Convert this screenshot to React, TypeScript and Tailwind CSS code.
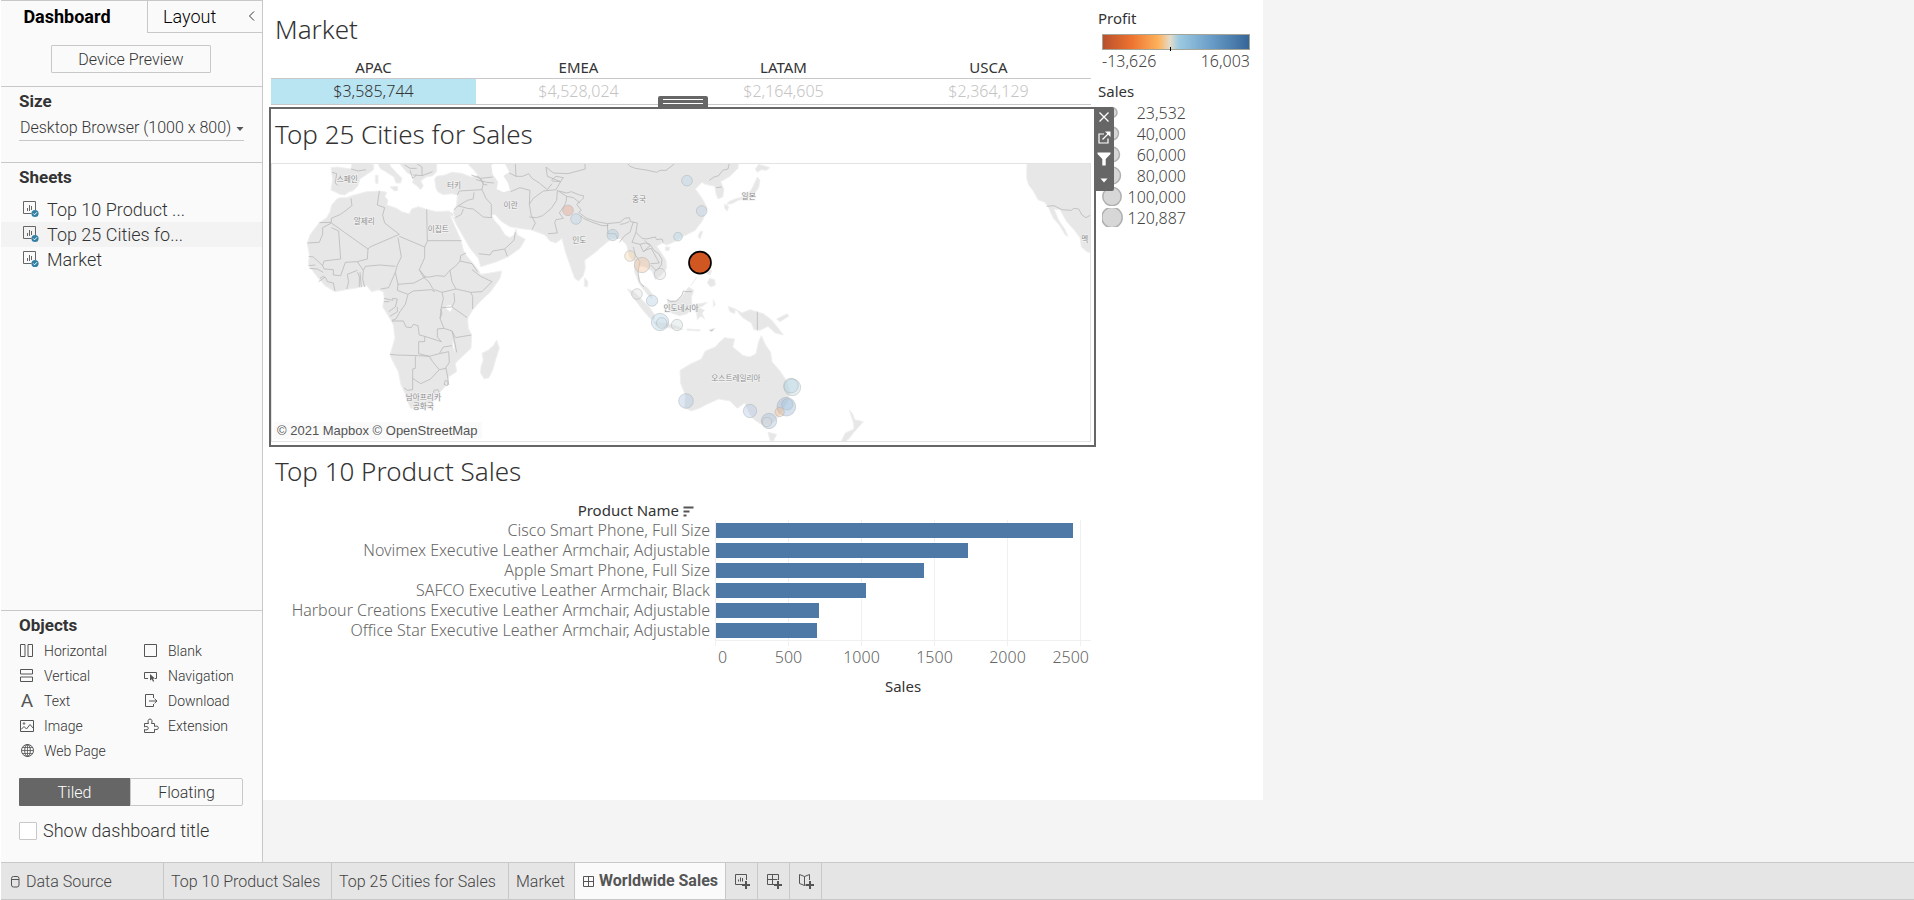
import React, { useState } from "react";

type IconProps = { className?: string; children: React.ReactNode };

function Icon({ className = "", children }: IconProps) {
  return (
    <svg
      viewBox="0 0 16 16"
      className={`h-4 w-4 shrink-0 ${className}`}
      fill="none"
      stroke="currentColor"
      strokeWidth="1"
      aria-hidden="true"
    >
      {children}
    </svg>
  );
}

/* ---------- Side pane ---------- */

const sheets = ["Top 10 Product ...", "Top 25 Cities fo...", "Market"];

function SheetIcon() {
  return (
    <svg viewBox="0 0 17 17" className="h-[17px] w-[17px] shrink-0" fill="none" aria-hidden="true">
      <path d="M13.500 9V.5H1.500v12h8" stroke="#666" />
      <path d="M5.500 10V7M7.500 10V4M9.500 9V5" stroke="#666" />
      <circle cx="13" cy="12.500" r="3.600" fill="#3480a5" />
      <path d="m11.300 12.500 1.300 1.300 2.300-2.500" stroke="#fff" />
    </svg>
  );
}

const objects: { label: string; icon: React.ReactNode }[] = [
  {
    label: "Horizontal",
    icon: (
      <Icon>
        <path d="M1.500 1.500h4.500v12h-4.500zM9 1.500h4.500v12h-4.500z" />
      </Icon>
    ),
  },
  {
    label: "Blank",
    icon: (
      <Icon>
        <path d="M1.500 1.500h12v12h-12z" />
      </Icon>
    ),
  },
  {
    label: "Vertical",
    icon: (
      <Icon>
        <path d="M1.500 1.500h12v4.500h-12zM1.500 9h12v4.500h-12z" />
      </Icon>
    ),
  },
  {
    label: "Navigation",
    icon: (
      <Icon>
        <path d="M5 10.500H1.500v-6h12v6H12" />
        <path d="m7 6 5 4.500-2 .2 1.200 2.600-1.200.5-1.200-2.600L7 12.500z" fill="currentColor" stroke="none" />
      </Icon>
    ),
  },
  {
    label: "Text",
    icon: <span className="w-4 text-center text-[19px] leading-4 font-normal">A</span>,
  },
  {
    label: "Download",
    icon: (
      <Icon>
        <path d="M10.500 5V1.500h-8v12h8V11M6 8h8M11.500 5.700 14 8l-2.500 2.300" />
      </Icon>
    ),
  },
  {
    label: "Image",
    icon: (
      <Icon>
        <path d="M1.500 2.500h13v11h-13z" />
        <path d="m2 11.500 3-3 2.500 2.500 3.500-4.500 3.500 4" />
        <circle cx="5" cy="5.500" r=".8" />
      </Icon>
    ),
  },
  {
    label: "Extension",
    icon: (
      <Icon>
        <path d="M1.500 5.500h4c-1-2-.5-4.500 1.500-4.500s2.500 2.500 1.500 4.500h3v3c1.800-.9 3.900-.4 3.900 1.300s-2.100 2.300-3.900 1.400v3.300h-10v-3c1.800.9 3.800.4 3.800-1.300s-2-2.200-3.800-1.300z" />
      </Icon>
    ),
  },
  {
    label: "Web Page",
    icon: (
      <Icon>
        <circle cx="8.500" cy="7.500" r="6" />
        <ellipse cx="8.500" cy="7.500" rx="2.800" ry="6" />
        <path d="M8.500 1.500v12M3.200 4.500h10.600M2.500 7.500h12M3.200 10.500h10.600" strokeWidth=".8" />
      </Icon>
    ),
  },
];

function SidePane() {
  const [titleShown, setTitleShown] = useState(false);
  return (
    <aside className="flex w-[262px] shrink-0 flex-col border-t border-r border-[#c8c8c8] bg-[#fafafa] font-[Roboto,sans-serif] font-light text-[#333]">
      <div className="flex h-8">
        <button type="button" className="w-[146px] pr-[14px] text-center text-[18px] leading-[30px] font-bold text-black">
          Dashboard
        </button>
        <button type="button" className="flex-1 border-b border-l border-[#c8c8c8] pl-[15px] text-left text-[18px] leading-[32px] text-black">
          Layout
        </button>
        <button type="button" aria-label="Collapse pane" className="w-5 border-b border-[#c8c8c8] text-[#333]">
          <svg viewBox="0 0 8 10" className="mb-[2px] ml-[6px] h-[10px] w-2" fill="none" stroke="currentColor" aria-hidden="true">
            <path d="M6 .5 1.500 5 6 9.500" />
          </svg>
        </button>
      </div>

      <div className="flex h-[53px] justify-center pt-3 pr-px">
        <button type="button" className="h-[28px] w-[160px] rounded-[1px] border border-[#c8c8c8] pt-px text-[16px]">
          Device Preview
        </button>
      </div>

      <section className="h-[76px] border-t border-[#c8c8c8] px-[18px]">
        <h2 className="pt-[2px] text-[17px] leading-6 font-bold">
          <label htmlFor="size">Size</label>
        </h2>
        <div className="relative mt-[3px] border-b border-[#c8c8c8]">
          <select id="size" className="h-6 w-full appearance-none bg-transparent pl-px text-[16px]">
            <option>Desktop Browser (1000 x 800)</option>
          </select>
          <svg viewBox="0 0 8 4" className="pointer-events-none absolute top-[11px] right-0 h-1 w-2" fill="#555" aria-hidden="true">
            <path d="M.5 0h7L4 4z" />
          </svg>
        </div>
      </section>

      <section className="flex-1 border-t border-[#c8c8c8]">
        <h2 className="px-[18px] pt-[2px] pb-[8px] text-[17px] leading-6 font-bold">Sheets</h2>
        <ul>
          {sheets.map((name) => (
            <li key={name}>
              <button
                type="button"
                className={`flex h-[25px] w-full items-center gap-[8px] pb-px pl-[21px] text-[18px] ${name.includes("25") ? "bg-[#f3f3f3]" : ""}`}
              >
                <SheetIcon />
                {name}
              </button>
            </li>
          ))}
        </ul>
      </section>

      <section className="h-[252px] border-t border-[#c8c8c8] pr-[19px] pl-[18px]">
        <h2 className="pt-[2px] pb-px text-[17px] leading-6 font-bold">Objects</h2>
        <ul className="grid grid-cols-[124px_1fr]">
          {objects.map(({ label, icon }) => (
            <li key={label} className="flex h-[25px] items-center">
              <button type="button" className="flex items-center gap-[9px] text-[14px] leading-5">
                <span className="flex text-[#555]">{icon}</span>
                {label}
              </button>
            </li>
          ))}
        </ul>
        <div className="mt-[15px] flex h-7 text-[16px]">
          <button type="button" aria-pressed="true" className="flex-1 rounded-l-[1px] bg-[#666] pt-px text-white">
            Tiled
          </button>
          <button type="button" aria-pressed="false" className="flex-1 rounded-r-[2px] border border-[#c8c8c8] pt-px">
            Floating
          </button>
        </div>
        <label className="mt-4 flex items-center gap-[6px] text-[18px] leading-[18px]">
          <input
            type="checkbox"
            checked={titleShown}
            onChange={(e) => setTitleShown(e.target.checked)}
            className="h-[18px] w-[18px] appearance-none rounded-[1px] border border-[#c8c8c8] bg-white checked:bg-[#666]"
          />
          Show dashboard title
        </label>
      </section>
    </aside>
  );
}

/* ---------- Market table ---------- */

const markets = [
  { name: "APAC", sales: "$3,585,744", selected: true },
  { name: "EMEA", sales: "$4,528,024", selected: false },
  { name: "LATAM", sales: "$2,164,605", selected: false },
  { name: "USCA", sales: "$2,364,129", selected: false },
];

function ZoneTitle({ children }: { children: React.ReactNode }) {
  return <h2 className="pl-1 text-[26px] leading-9 font-light text-[#333]">{children}</h2>;
}

function MarketZone() {
  return (
    <section className="mr-[5px] ml-2 pt-[11px]">
      <ZoneTitle>Market</ZoneTitle>
      <table className="mt-[9px] mb-[2px] w-full table-fixed text-center text-[16px]">
        <thead>
          <tr className="border-b border-[#c8c8c8]">
            {markets.map((m) => (
              <th key={m.name} scope="col" className="h-[22px] p-0 text-[15px] leading-[22px] font-normal text-[#333]">
                {m.name}
              </th>
            ))}
          </tr>
        </thead>
        <tbody>
          <tr className="border-b border-[#c8c8c8]">
            {markets.map((m) => (
              <td
                key={m.name}
                className={`h-[26px] p-0 leading-[25px] font-light ${m.selected ? "bg-[#b9e4f1] text-[#333]" : "text-[#c4c4c4]"}`}
              >
                {m.sales}
              </td>
            ))}
          </tr>
        </tbody>
      </table>
    </section>
  );
}

/* ---------- City map ---------- */

/* Land is traced on a grid of three units to the pixel, from (270, 155). */
const land = [
  // Africa
  "M212 128 230 128 245 122 290 110 330 108 350 112 345 125 354 135 350 150 380 160 395 170 418 177 425 162 445 155 470 163 500 170 535 168 552 178 554 190 540 180 555 215 573 255 580 285 588 300 605 320 625 345 632 358 655 355 695 348 690 370 662 410 630 440 608 465 593 490 595 520 605 540 603 580 578 603 556 625 560 650 537 665 530 690 510 712 490 737 465 752 445 758 422 760 412 738 405 715 393 690 385 650 370 622 360 600 375 550 370 510 362 495 350 475 338 455 343 430 340 410 325 405 305 410 290 392 265 398 240 402 195 410 165 392 145 370 130 350 115 330 118 300 112 265 120 240 135 220 148 203 170 188 180 170 185 150 203 130z",
  // Madagascar
  "M680 555 688 580 678 610 668 645 657 668 643 672 632 655 633 635 640 615 636 595 655 585 670 572z",
  // Iberia and France
  "M183 38 200 36 243 42 246 20 292 20 312 30 310 45 288 60 270 72 264 92 248 108 238 110 224 120 210 118 183 105 188 72z",
  // Italy, Balkans
  "M322 20 330 40 350 52 372 66 378 84 392 84 396 70 378 52 362 34 356 20zM360 96 382 94 384 106 374 108zM316 62 324 60 324 86 316 84zM384 20 410 52 430 64 428 84 440 92 452 104 460 92 452 78 468 66 488 62 500 50 500 20z",
  // Asia
  "M600 20 596 30 612 46 625 62 604 66 575 55 545 52 525 60 500 64 494 72 498 100 505 112 520 119 545 116 562 120 560 150 552 165 548 185 560 210 580 245 600 280 625 310 632 335 680 320 715 305 750 280 766 253 742 240 738 222 732 240 720 248 705 240 690 215 672 195 665 180 675 178 695 200 720 215 760 222 785 225 825 240 840 258 858 264 876 250 886 290 902 336 914 370 926 378 940 362 946 338 944 316 976 292 1008 264 1024 252 1050 250 1070 270 1078 306 1094 320 1094 352 1110 390 1132 418 1144 430 1146 416 1132 398 1112 386 1104 356 1106 332 1126 336 1146 348 1156 374 1172 362 1190 340 1188 316 1176 296 1160 274 1176 264 1190 270 1210 262 1240 244 1276 226 1298 196 1312 160 1300 136 1288 118 1276 102 1296 82 1306 88 1334 94 1338 116 1344 132 1358 126 1362 104 1352 80 1380 64 1404 40 1406 20z",
  // Sri Lanka, Hainan, Taiwan
  "M943 368 954 380 952 396 943 394zM1186 276 1200 276 1196 288 1186 286zM1292 228 1298 230 1290 252 1284 244z",
  // Japan
  "M1466 28 1500 38 1488 46 1474 44 1462 52 1456 42zM1462 66 1470 76 1466 98 1452 118 1430 130 1404 136 1386 146 1370 148 1376 140 1400 130 1424 126 1444 104 1454 84zM1364 148 1376 154 1372 168 1364 160z",
  // Sumatra, Java, Borneo
  "M1072 402 1092 410 1112 430 1138 456 1154 480 1152 496 1138 488 1116 462 1096 436zM1150 500 1186 504 1224 514 1240 524 1206 520 1158 512zM1192 434 1216 438 1236 424 1256 396 1272 406 1264 426 1266 452 1252 476 1228 482 1204 474 1194 456z",
  // Sulawesi and the islands east
  "M1280 448 1312 442 1300 452 1286 458 1304 466 1296 474 1304 492 1292 484 1282 494 1280 474 1272 466zM1316 524 1336 520 1326 530zM1250 522 1290 524 1290 528 1252 526zM1374 454 1396 462 1394 476 1380 470zM1330 434 1336 448 1330 456z",
  // Philippines
  "M1282 290 1296 296 1292 320 1304 336 1296 336 1284 318zM1310 344 1326 346 1320 360 1312 356zM1318 370 1334 374 1336 390 1322 396 1312 384zM1280 366 1262 392 1276 374z",
  // New Guinea
  "M1396 462 1416 474 1440 464 1480 476 1504 494 1520 514 1540 540 1516 534 1494 514 1470 526 1452 524 1444 504 1418 488zM1520 492 1552 476 1556 484 1530 500z",
  // Australia, Tasmania
  "M1474 542 1488 572 1502 592 1506 620 1530 648 1550 678 1560 712 1552 740 1534 772 1516 796 1498 810 1470 806 1450 792 1436 772 1424 744 1402 760 1380 738 1346 732 1314 746 1288 760 1264 768 1244 758 1246 720 1232 686 1230 646 1260 628 1294 612 1306 588 1336 576 1348 562 1364 548 1394 552 1388 576 1420 602 1440 606 1458 596 1466 560zM1494 832 1520 838 1510 858 1500 856z",
  // New Zealand
  "M1738 766 1748 776 1754 794 1780 800 1764 818 1750 834 1738 850 1724 862 1712 862 1726 834 1752 822 1750 802z",
  // North America
  "M2271 20 2270 70 2276 90 2290 108 2304 134 2324 142 2336 158 2350 190 2368 210 2386 240 2394 244 2384 222 2366 196 2352 162 2370 164 2390 200 2412 224 2430 248 2434 276 2450 290 2470 296 2470 20z",
].join("");

const water =
  // Caspian Sea, Lake Victoria, Lake Malawi
  "M664 30 684 20 706 28 718 52 700 62 714 84 720 106 700 112 680 102 684 80 668 58zM528 454 540 450 549 456 540 470 530 462zM547 555 552 570 555 592 549 575z";

const borders = [
  "M243 130 246 152 212 178 184 190 184 202 148 203M184 204 294 282 300 276 388 238 344 204 338 180 344 158 322 150 328 108M388 244 464 276 464 308 448 344 466 366 432 384 384 388 376 352 382 330 394 306 384 248M470 163 472 258 464 276M472 257 574 257M184 204 158 218 158 238 148 262 112 264M206 228 212 312 162 318 158 332 130 306 116 304M206 228 184 218M294 282 292 312 262 320 226 322 212 362 190 360 190 344 162 342 158 332M262 320 280 346 286 334 330 330 376 334M280 346 278 372 284 396M262 352 268 364 268 396M270 352 274 396M232 358 236 380 230 402M232 358 262 346M116 332 136 330M118 340 142 342 160 352M150 370 160 364 168 370 172 380 190 384 195 408M166 366 146 380M376 352 356 398 332 402M384 388 382 406 414 418 430 408 484 404 494 410 476 380 460 366",
  "M448 344 460 366 478 366 500 362 524 364 540 346 546 380 558 402 516 412 494 404M540 346 556 334 570 318 572 302 588 294M570 318 606 326 622 350M606 344 632 364 666 380 636 410 602 412 558 402M602 412 608 424 608 462M552 414 554 440 546 456 592 488M546 456 514 458 520 430 516 412M514 458 510 490 522 520 546 528 556 548 604 540M522 520 502 522 502 546 514 560 464 544 464 560 446 560 446 596 478 604 508 596 520 576 546 572M360 598 380 600 446 602 478 604M366 498 400 498 408 516 424 518 430 508 444 512 448 540 464 544M414 418 406 448 390 470 378 492 366 496M342 430 368 436 368 430 382 432 376 456 356 470M342 440 358 440M382 456 382 470 360 484M436 604 436 640 428 642 428 704 412 706 402 698M428 670 452 686 482 672 508 644 528 640 532 660 536 690M508 644 488 620 478 604M508 596 536 590 538 622 526 640M526 676 534 680 532 692 522 688zM492 706 504 704 508 712 500 718 490 712zM546 528 554 560 560 592M512 462 516 476 510 490",
  // Near East and Central Asia
  "M562 120 568 108 636 104 640 84 622 62M566 152 592 136 610 132 612 112M552 165 564 152 592 160 610 162 640 186 664 188M556 188 574 178 580 162M636 104 648 130 664 148 664 188M626 296 660 300 668 288 704 282 732 256 736 232M704 282 712 304M604 60 632 70 668 66M618 74 650 82 672 84M632 70 640 88 652 90M722 110 750 98 780 106 778 148 784 182 796 204 786 224M778 148 790 130 820 108 858 104 872 80 832 64 828 36 850 54 894 56 946 42 944 22M736 26 738 64 758 64 776 56 786 70 808 84 832 104 846 86M844 76 858 64 880 68 872 80 846 78M778 186 800 188 818 182 844 160 860 136 862 106M862 106 890 124 888 140 884 150 868 174 880 190 858 194 854 202 862 234 834 236M718 54 738 64M420 46 428 70 440 60M430 60 456 62 456 36 440 26M404 30 420 40 440 40M456 62 488 50M186 52 200 56 196 84 204 92M243 42 264 48 288 44",
  // South and East Asia
  "M866 108 890 114 904 110 928 120 940 122 940 130 934 136 920 148 934 166 926 172 950 190 980 200 1012 206 1014 212 996 212 962 200 940 190 932 182M890 124 910 128 930 144M1012 206 1050 202 1064 190 1078 188 1082 200 1102 204 1098 232 1116 250 1128 252 1156 246 1160 254 1176 252 1180 262M1012 208 1014 236 1036 236 1044 252M1050 208 1064 206 1078 200M1090 200 1080 232 1066 240 1048 262M1098 232 1086 262 1110 268 1120 290 1140 272 1124 256M1090 276 1096 300 1110 320 1104 350 1108 380 1122 396M1120 290 1130 284 1144 280 1160 310 1168 324 1142 326M1110 268 1126 264 1140 268 1152 286 1166 296 1176 314 1174 330 1160 348 1142 330M1070 22 1080 34 1096 40 1134 46 1160 52 1170 46 1188 46 1214 26M1318 76 1332 66 1346 62 1358 46 1374 42 1378 24M1338 98 1356 96M1192 434 1202 440 1220 438 1236 420 1240 408 1248 410 1266 410M1462 470 1462 526M1320 528 1330 524",
  // United States and Mexico
  "M2330 154 2352 152 2376 164 2404 166 2412 160 2426 162 2436 180 2448 188 2462 180",
].join("");

const mapLabels = [
  { x: 232, y: 82, text: "스페인" },
  { x: 552, y: 100, text: "터키" },
  { x: 722, y: 160, text: "이란" },
  { x: 283, y: 208, text: "알제리" },
  { x: 505, y: 231, text: "이집트" },
  { x: 460, y: 735, text: "남아프리카" },
  { x: 460, y: 762, text: "공화국" },
  { x: 1107, y: 141, text: "중국" },
  { x: 1436, y: 133, text: "일본" },
  { x: 928, y: 264, text: "인도" },
  { x: 1233, y: 469, text: "인도네시아" },
  { x: 1398, y: 679, text: "오스트레일리아" },
  { x: 2444, y: 260, text: "멕" },
];

const cities = [
  { x: 894, y: 166, r: 16, color: "#e8a590" },
  { x: 918, y: 192, r: 16, color: "#b9d5e8" },
  { x: 1028, y: 240, r: 17, color: "#b0cde0" },
  { x: 1080, y: 303, r: 16, color: "#f5d6ac" },
  { x: 1116, y: 330, r: 23, color: "#f3c3a0" },
  { x: 1170, y: 357, r: 17, color: "#dfdfdf" },
  { x: 1251, y: 77, r: 16, color: "#b9d5e8" },
  { x: 1295, y: 168, r: 16, color: "#bccfe5" },
  { x: 1224, y: 245, r: 13, color: "#b5d7ea" },
  { x: 1101, y: 417, r: 16, color: "#dfdfdf" },
  { x: 1146, y: 437, r: 17, color: "#b5cde3" },
  { x: 1170, y: 501, r: 26, color: "#b5d5e8" },
  { x: 1175, y: 504, r: 16, color: "#d5dfe4" },
  { x: 1221, y: 510, r: 17, color: "#d6dddf" },
  { x: 1248, y: 738, r: 22, color: "#b0c8e2" },
  { x: 1440, y: 768, r: 20, color: "#b4c8e6" },
  { x: 1567, y: 697, r: 25, color: "#c0d6dc" },
  { x: 1563, y: 692, r: 22, color: "#b5d5e4" },
  { x: 1549, y: 755, r: 28, color: "#9bb8d6" },
  { x: 1552, y: 748, r: 17, color: "#a5c8e0" },
  { x: 1529, y: 771, r: 14, color: "#f3bd90" },
  { x: 1497, y: 798, r: 23, color: "#a9c0dc" },
  { x: 1491, y: 801, r: 14, color: "#dcdcd8" },
];

function CityMap() {
  return (
    <svg viewBox="272 164 818 277" className="block w-full" role="img" aria-label="Map of the top 25 cities for sales">
      <g transform="translate(270 155) scale(.33333)">
        <path d={land} fill="#e7e7e7" stroke="#efefef" strokeWidth="3" strokeLinejoin="round" />
        <path d={water} fill="#fff" />
        <path d={borders} fill="none" stroke="#b9b9b9" strokeWidth="2.400" strokeLinejoin="round" />
        <g
          className="font-['Noto_Sans_CJK_KR',sans-serif] text-[23px]"
          fill="#8f8f8f"
          stroke="#f2f2f2"
          strokeWidth="4"
          paintOrder="stroke"
          textAnchor="middle"
        >
          {mapLabels.map((l) => (
            <text key={l.text} x={l.x} y={l.y}>
              {l.text}
            </text>
          ))}
        </g>
        {cities.map((c) => (
          <circle
            key={`${c.x}-${c.y}`}
            cx={c.x}
            cy={c.y}
            r={c.r}
            fill={c.color}
            fillOpacity=".42"
            stroke="#a8adb0"
            strokeOpacity=".55"
            strokeWidth="2.500"
          />
        ))}
        <circle cx="1290" cy="323" r="33" fill="#d05622" stroke="#000" strokeWidth="5" />
      </g>
    </svg>
  );
}

function ZoneToolbar() {
  return (
    <div className="absolute -top-[2px] left-full z-10 flex w-5 flex-col rounded-tr-[2px] rounded-br-[2px] bg-[#666] text-white">
      <button type="button" aria-label="Remove from dashboard" className="flex h-5 items-center justify-center">
        <svg viewBox="0 0 10 10" className="h-[10px] w-[10px]" stroke="currentColor" strokeWidth="1.300" aria-hidden="true">
          <path d="m.5.5 9 9M9.500.5l-9 9" />
        </svg>
      </button>
      <button type="button" aria-label="Go to sheet" className="flex h-5 items-center justify-center">
        <svg viewBox="0 0 13 13" className="h-[13px] w-[13px]" fill="none" stroke="currentColor" strokeWidth="1.200" aria-hidden="true">
          <path d="M6 3H1v9h9V7.500M4.500 8.500l6.500-6.500" />
          <path d="M7 .5h5.500V6z" fill="currentColor" stroke="none" />
        </svg>
      </button>
      <button type="button" aria-label="Use as filter" className="flex h-6 items-center justify-center">
        <svg viewBox="0 0 14 14" className="h-[14px] w-[14px]" fill="currentColor" aria-hidden="true">
          <path d="M.5.5h13v1.500L8.700 7v6.500H5.300V7L.5 2z" />
        </svg>
      </button>
      <button type="button" aria-label="More options" className="flex h-5 items-start justify-center pt-[7px]">
        <svg viewBox="0 0 8 5" className="h-[5px] w-2" fill="currentColor" aria-hidden="true">
          <path d="M.5.5h7L4 4.500z" />
        </svg>
      </button>
    </div>
  );
}

function MapZone() {
  return (
    <section className="relative ml-[6px] border-2 border-[#666] pr-[3px] pb-[3px]">
      <div className="absolute -top-[13px] left-[387px] flex h-3 w-[50px] flex-col gap-[3px] rounded-t-[2px] bg-[#666] px-[5px] pt-[3px]">
        <span className="h-px bg-white" />
        <span className="h-px bg-white" />
      </div>
      <div className="pt-[7px] pb-[11px]">
        <ZoneTitle>Top 25 Cities for Sales</ZoneTitle>
      </div>
      <div className="relative border border-[#e3e3e3]">
        <CityMap />
        <p className="absolute bottom-[2px] left-[2px] bg-[#fafafa] pr-1 pl-[3px] font-['Liberation_Sans',sans-serif] text-[13px] leading-[17px] text-[#555]">
          © 2021 Mapbox © OpenStreetMap
        </p>
      </div>
      <ZoneToolbar />
    </section>
  );
}

/* ---------- Product bars ---------- */

const products = [
  { name: "Cisco Smart Phone, Full Size", sales: 2440 },
  { name: "Novimex Executive Leather Armchair, Adjustable", sales: 1722 },
  { name: "Apple Smart Phone, Full Size", sales: 1422 },
  { name: "SAFCO Executive Leather Armchair, Black", sales: 1025 },
  { name: "Harbour Creations Executive Leather Armchair, Adjustable", sales: 704 },
  { name: "Office Star Executive Leather Armchair, Adjustable", sales: 690 },
];
const axisMax = 2563;

function ProductZone() {
  return (
    <section className="mr-[5px] ml-2 pt-[6px] text-[16px] font-light text-[#666]">
      <ZoneTitle>Top 10 Product Sales</ZoneTitle>
      <div className="mt-[10px] grid grid-cols-[444px_1fr]">
        <h3 className="flex h-[21px] items-center justify-end gap-1 pr-[21px] text-[15px] leading-5 font-normal text-[#333]">
          Product Name
          <svg viewBox="0 0 11 11" className="mt-[3px] h-[11px] w-[11px]" stroke="#555" strokeWidth="2" aria-hidden="true">
            <path d="M.5 1.500h10M.5 5.500h6M.5 9.500h3" />
          </svg>
        </h3>
        <div />
        <ul className="pr-[5px] text-right whitespace-nowrap">
          {products.map((p) => (
            <li key={p.name} className="h-5 leading-[21px]">
              {p.name}
            </li>
          ))}
        </ul>
        <div className="relative">
          <div className="absolute inset-x-0 top-0 -bottom-[5px] flex">
            {[0, 500, 1000, 1500, 2000].map((v) => (
              <div key={v} className="w-[73px] border-l border-[#f0f0f0]" />
            ))}
            <div className="flex-1 border-l border-[#f0f0f0]" />
          </div>
          <div className="relative border-b border-[#f0f0f0] pl-px">
            {products.map((p) => (
              <div key={p.name} className="flex h-5 items-center">
                <div className="h-[15px] bg-[#4e79a7]" style={{ width: `${(p.sales / axisMax) * 100}%` }} />
              </div>
            ))}
          </div>
        </div>
        <div />
        <div className="flex pt-[6px] pr-[2px] text-center leading-5">
          <span className="w-[37px] pl-[3px] text-left">0</span>
          <span className="w-[73px]">500</span>
          <span className="w-[73px]">1000</span>
          <span className="w-[73px]">1500</span>
          <span className="w-[73px]">2000</span>
          <span className="flex-1 text-right">2500</span>
        </div>
        <div />
        <div className="pt-[9px] text-center text-[15px] leading-5 font-normal text-[#333]">Sales</div>
      </div>
    </section>
  );
}

/* ---------- Legends ---------- */

const sizes = [
  { label: "23,532", r: 5 },
  { label: "40,000", r: 6.5 },
  { label: "60,000", r: 7.5 },
  { label: "80,000", r: 8.5 },
  { label: "100,000", r: 9.2 },
  { label: "120,887", r: 10.2 },
];

function Legends() {
  return (
    <div className="w-[167px] pt-[7px] pl-[2px] text-[16px] font-light text-[#444]">
      <h3 className="text-[15px] leading-[22px] font-normal text-[#333]">Profit</h3>
      <div className="mt-[5px] pl-1">
        <div className="relative h-4 w-[148px] border border-[#a5a598] bg-[linear-gradient(90deg,#b9502c_0%,#ee7430_20%,#fdb25c_38%,#e4dccb_46%,#9ccae2_52%,#6a9dc8_74%,#366699_100%)]">
          <span className="absolute -bottom-[2px] left-[67px] h-1 w-px bg-black" />
        </div>
        <div className="flex w-[148px] justify-between leading-[22px]">
          <span>-13,626</span>
          <span>16,003</span>
        </div>
      </div>
      <h3 className="mt-2 text-[15px] leading-[22px] font-normal text-[#333]">Sales</h3>
      <ul>
        {sizes.map((s) => (
          <li key={s.label} className="flex h-[21px] w-[88px] items-center justify-between pl-1">
            <svg viewBox="0 0 22 19" className="h-[19px] w-[22px] shrink-0" aria-hidden="true">
              <circle cx="10" cy="9.500" r={s.r} fill="#d7d7d7" stroke="#b0b0b0" strokeWidth="1.500" />
            </svg>
            {s.label}
          </li>
        ))}
      </ul>
    </div>
  );
}

/* ---------- Sheet tabs ---------- */

function SheetTabs() {
  const tab = "flex items-center border-r border-[#c8c8c8] whitespace-nowrap";
  return (
    <nav className="flex h-[38px] border-y border-[#c8c8c8] bg-[#e5e5e5] font-[Roboto,sans-serif] text-[16px] font-light text-[#444]">
      <button type="button" className={`${tab} w-[163px] gap-[6px] pt-px pl-[9px]`}>
        <svg viewBox="0 0 10 12" className="h-3 w-[10px]" fill="none" stroke="#555" aria-hidden="true">
          <rect x="1.500" y=".5" width="7.500" height="10.500" rx="2" />
          <path d="M1.500 3.500h7.500" />
        </svg>
        Data Source
      </button>
      <button type="button" className={`${tab} w-[168px] pt-px pl-[7px]`}>Top 10 Product Sales</button>
      <button type="button" className={`${tab} w-[177px] pt-px pl-[7px]`}>Top 25 Cities for Sales</button>
      <button type="button" className={`${tab} w-[66px] pt-px pl-[7px]`}>Market</button>
      <button type="button" aria-current="page" className={`${tab} w-[151px] gap-1 bg-[#fafafa] pl-[7px] font-bold text-[#555]`}>
        <svg viewBox="0 0 13 13" className="h-[13px] w-[13px]" fill="none" stroke="#555" aria-hidden="true">
          <path d="M1.500 1.500h10v10h-10zM6.500 1.500v10M1.500 6.500h10" />
        </svg>
        Worldwide Sales
      </button>
      <button type="button" aria-label="New worksheet" className={`${tab} w-8 justify-center text-[#555]`}>
        <Icon>
          <path d="M12.500 7V1.500h-11v10H8M4.500 8.500V6.500M6.500 8.500v-4M8.500 8.500V5" />
          <path d="M12 8v8M8 12h8" strokeWidth="2" />
        </Icon>
      </button>
      <button type="button" aria-label="New dashboard" className={`${tab} w-8 justify-center text-[#555]`}>
        <Icon>
          <path d="M12.500 7V1.500h-11v10H8M6.500 1.500v10M1.500 6.500h10" />
          <path d="M12 8v8M8 12h8" strokeWidth="2" />
        </Icon>
      </button>
      <button type="button" aria-label="New story" className={`${tab} w-8 justify-center text-[#555]`}>
        <Icon>
          <path d="M6.500 3.500v9l-5-2v-9zM6.500 3.500l5-2V7M6.500 12.500l1.500-.6" />
          <path d="M12 8v8M8 12h8" strokeWidth="2" />
        </Icon>
      </button>
    </nav>
  );
}

export default function App() {
  return (
    <div className="flex min-h-screen flex-col bg-white pl-px font-['Noto_Sans',sans-serif]">
      <div className="flex flex-1">
        <SidePane />
        <main className="min-w-0 flex-1 bg-[#f4f4f4]">
          <div className="flex min-h-[800px] w-[1000px] bg-white">
            <div className="min-w-0 flex-1">
              <MarketZone />
              <MapZone />
              <ProductZone />
            </div>
            <Legends />
          </div>
        </main>
      </div>
      <SheetTabs />
    </div>
  );
}
